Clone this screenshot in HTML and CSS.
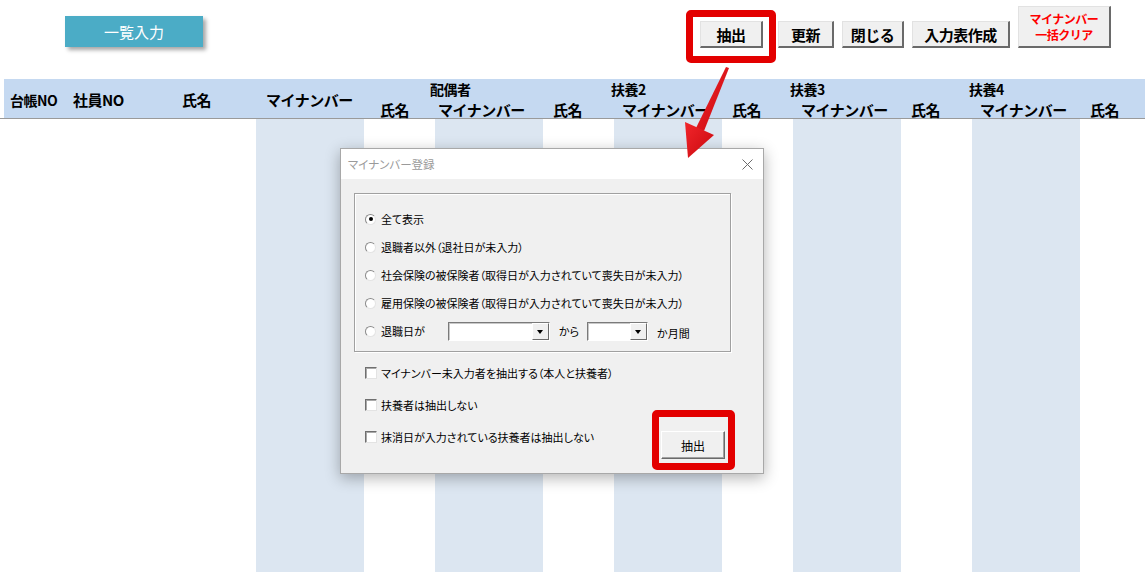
FILE: index.html
```html
<!DOCTYPE html>
<html lang="ja">

<head>
  <meta charset="UTF-8" />
  <title>マイナンバー登録</title>
  <link rel="stylesheet" href="styles.css">
</head>

<body>

  <!-- top buttons -->
  <div class="toolbar">
    <button class="list-btn">一覧入力</button>
    <div class="actions">
      <span class="mark mark-top"><button class="btn w-extract">抽出</button></span>
      <button class="btn w-update">更新</button>
      <button class="btn w-close">閉じる</button>
      <button class="btn w-make">入力表作成</button>
      <button class="btn w-clear">マイナンバー<br>一括クリア</button>
    </div>
  </div>

  <!-- sheet -->
  <div class="sheet">
    <div class="sheet-head">
      <div class="h-span h-ledger">台帳NO</div>
      <div class="h-span h-emp">社員NO</div>
      <div class="h-span h-name1">氏名</div>
      <div class="h-span h-num1">マイナンバー</div>

      <div class="grp grp-spouse">配偶者</div>
      <div class="grp grp-2">扶養2</div>
      <div class="grp grp-3">扶養3</div>
      <div class="grp grp-4">扶養4</div>

      <div class="sub h-name first">氏名</div>
      <div class="sub h-num first">マイナンバー</div>
      <div class="sub h-name">氏名</div>
      <div class="sub h-num">マイナンバー</div>
      <div class="sub h-name">氏名</div>
      <div class="sub h-num">マイナンバー</div>
      <div class="sub h-name">氏名</div>
      <div class="sub h-num">マイナンバー</div>
      <div class="sub h-name">氏名</div>
    </div>
    <div class="sheet-body">
      <div></div>
      <div></div>
      <div></div>
      <div class="stripe"></div>
      <div></div>
      <div class="stripe"></div>
      <div></div>
      <div class="stripe"></div>
      <div></div>
      <div class="stripe"></div>
      <div></div>
      <div class="stripe"></div>
      <div></div>
    </div>
  </div>

  <!-- dialog -->
  <div class="dialog">
    <div class="dialog-title">
      <span>マイナンバー登録</span>
      <svg class="x-icon" width="11" height="11" viewBox="0 0 11 11">
        <path d="M0.5 0.5L10.5 10.5M10.5 0.5L0.5 10.5" stroke="#6b6b6b" stroke-width="1" />
      </svg>
    </div>
    <div class="dialog-body">
      <div class="frame">
        <div class="opt"><span class="radio on"></span>全て表示</div>
        <div class="opt"><span class="radio"></span>退職者以外（退社日が未入力）</div>
        <div class="opt"><span class="radio"></span>社会保険の被保険者（取得日が入力されていて喪失日が未入力）</div>
        <div class="opt"><span class="radio"></span>雇用保険の被保険者（取得日が入力されていて喪失日が未入力）</div>
        <div class="opt">
          <span class="radio"></span><span class="opt-label">退職日が</span>
          <span class="combo combo-date"><span class="drop"></span></span>
          <span class="from">から</span>
          <span class="combo combo-month"><span class="drop"></span></span>
          <span class="months">か月間</span>
        </div>
      </div>

      <div class="check-row"><span class="check"></span>マイナンバー未入力者を抽出する（本人と扶養者）</div>
      <div class="check-row"><span class="check"></span>扶養者は抽出しない</div>
      <div class="check-row last">
        <span class="check-text"><span class="check"></span>抹消日が入力されている扶養者は抽出しない</span>
        <span class="mark mark-dlg"><button class="dlg-btn">抽出</button></span>
      </div>
    </div>
  </div>

  <!-- annotation arrow -->
  <svg class="arrow" width="1145" height="573" viewBox="0 0 1145 573">
    <defs>
      <linearGradient id="red" x1="0" y1="0" x2="1" y2="1">
        <stop offset="0" stop-color="#f2262b" />
        <stop offset="1" stop-color="#c8080e" />
      </linearGradient>
    </defs>
    <polygon points="726,67 729,68 704,131 696,128" fill="url(#red)" />
    <polygon points="685,122 714,135 688,158" fill="url(#red)" />
  </svg>

</body>

</html>
```

FILE: styles.css
```css
:root {
  --cols: 61px 95px 96px 108px 71px 108px 71px 108px 71px 108px 71px 108px 65px;
  --head-blue: #c5d9f1;
  --stripe: #dce6f1;
  --mark-red: #e30000;
  --face: #f0f0f0;
}

* {
  margin: 0;
  padding: 0;
  box-sizing: border-box;
}

body {
  position: relative;
  width: 1145px;
  height: 573px;
  overflow: hidden;
  background-color: #fff;
  font-family: "Noto Sans CJK JP", "Noto Sans", sans-serif;
  color: #000;
}

/* Top buttons */
.toolbar {
  display: flex;
  align-items: flex-start;
  height: 79px;
  padding: 0 34px 0 65px;
}

.list-btn {
  margin-top: 16px;
  width: 138px;
  height: 31px;
  background-color: #4bacc6;
  color: #fff;
  border: none;
  font-family: inherit;
  font-size: 15px;
  box-shadow: 3px 3px 4px rgba(0, 0, 0, 0.35);
}

.actions {
  margin-left: auto;
  display: flex;
  align-items: flex-end;
  gap: 8px;
  height: 48px;
}

.btn {
  height: 27px;
  background-color: var(--face);
  border: 1px solid;
  border-color: #e2e2e2 #6a6a6a #6a6a6a #e2e2e2;
  border-right-width: 2px;
  border-bottom-width: 2px;
  font-family: inherit;
  font-size: 15px;
  font-weight: bold;
  letter-spacing: -0.5px;
  line-height: 1;
}

.w-extract { width: 63px; }
.w-update { width: 56px; margin-left: 7px; }
.w-close { width: 62px; }
.w-make { width: 98px; }

.w-clear {
  width: 93px;
  height: 42px;
  color: #ff0000;
  font-size: 12px;
  line-height: 16px;
}

/* red highlight boxes */
.mark {
  position: relative;
  display: flex;
}

.mark::after {
  content: "";
  position: absolute;
  border: 7px solid var(--mark-red);
  border-radius: 5px;
  pointer-events: none;
}

.mark-top::after {
  inset: -11px -13px -15px -14px;
}

.mark-dlg::after {
  inset: -11px -10px -11px -9px;
}

/* Sheet */
.sheet {
  margin-left: 4px;
}

.sheet-head,
.sheet-body {
  display: grid;
  grid-template-columns: var(--cols);
}

.sheet-head {
  grid-template-rows: 20px 19px;
  background-color: var(--head-blue);
  font-size: 15px;
  font-weight: bold;
  line-height: 16px;
  letter-spacing: -0.5px;
  white-space: nowrap;
}

.h-span {
  grid-row: 1 / 3;
  align-self: center;
  padding-top: 3px;
}

.h-ledger { padding-left: 6px; font-size: 14px; }
.h-emp { padding-left: 8px; }
.h-name1 { padding-left: 22px; }
.h-num1 { padding-left: 10px; }

.grp {
  grid-row: 1;
  padding-top: 2px;
  margin-left: -3px;
  font-size: 14px;
}

.grp-spouse { grid-column: 6 / span 2; margin-left: -5px; }
.grp-2 { grid-column: 8 / span 2; }
.grp-3 { grid-column: 10 / span 2; }
.grp-4 { grid-column: 12 / span 2; }

.sub {
  grid-row: 2;
  padding-top: 3px;
}

.h-name { padding-left: 10px; }
.h-num { padding-left: 8px; }
.h-name.first { padding-left: 16px; }
.h-num.first { padding-left: 3px; }

.sheet-body {
  height: 454px;
  margin-left: -4px;
  padding-left: 4px;
  border-top: 1px solid #9a9a9a;
}

.stripe {
  background-color: var(--stripe);
}

/* Dialog */
.dialog {
  position: absolute;
  left: 340px;
  top: 148px;
  width: 424px;
  height: 326px;
  border: 1px solid #a8a8a8;
  background-color: var(--face);
  box-shadow: 0 4px 14px rgba(0, 0, 0, 0.3);
  font-size: 11px;
  font-feature-settings: "palt";
  z-index: 2;
}

.dialog-title {
  display: flex;
  align-items: center;
  justify-content: space-between;
  height: 30px;
  padding: 0 10px 0 7px;
  background-color: #fff;
  color: #9a9a9a;
  font-size: 11.5px;
}

.x-icon {
  display: block;
}

.dialog-body {
  padding: 14px 0 0 13px;
}

.frame {
  width: 377px;
  height: 159px;
  margin-bottom: 5px;
  padding-top: 11px;
  border: 1px solid #a0a0a0;
  box-shadow: inset 1px 1px 0 #fff, 1px 1px 0 #fff;
}

.opt {
  display: flex;
  align-items: center;
  height: 28px;
  padding-left: 10px;
  white-space: nowrap;
}

.radio {
  position: relative;
  width: 11px;
  height: 11px;
  margin-right: 5px;
  border: 1px solid;
  border-color: #8a8a8a #e4e4e4 #e4e4e4 #8a8a8a;
  border-radius: 50%;
  background-color: #fff;
}

.radio.on::after {
  content: "";
  position: absolute;
  left: 2.5px;
  top: 2.5px;
  width: 4px;
  height: 4px;
  border-radius: 50%;
  background-color: #000;
}

.opt-label {
  width: 67px;
}

.combo {
  position: relative;
  display: flex;
  justify-content: flex-end;
  height: 19px;
  border: 1px solid;
  border-color: #7a7a7a #fff #fff #7a7a7a;
  box-shadow: inset 1px 1px 0 #c8c8c8;
  background-color: #fff;
}

.combo-date { width: 102px; }
.combo-month { width: 61px; }

.drop {
  position: relative;
  width: 17px;
  height: 17px;
  background-color: var(--face);
  border: 1px solid;
  border-color: #fff #6a6a6a #6a6a6a #fff;
}

.drop::after {
  content: "";
  position: absolute;
  left: 4px;
  top: 6px;
  border-top: 4px solid #000;
  border-left: 3.5px solid transparent;
  border-right: 3.5px solid transparent;
}

.from {
  width: 28px;
  margin-left: 9px;
}

.months {
  margin-left: 9px;
  padding-top: 3px;
}

.check-row {
  display: flex;
  align-items: center;
  height: 32px;
  padding-left: 11px;
  white-space: nowrap;
}

.check {
  width: 12px;
  height: 12px;
  margin-right: 4px;
  background-color: #fff;
  border: 1px solid;
  border-color: #6f6f6f #e3e3e3 #e3e3e3 #6f6f6f;
  box-shadow: inset 1px 1px 0 #a9a9a9;
}

.check-row.last {
  align-items: flex-start;
  justify-content: space-between;
  padding-right: 38px;
}

.check-text {
  display: flex;
  align-items: center;
  height: 32px;
}

.dlg-btn {
  margin-top: 10px;
  width: 64px;
  height: 28px;
  background-color: var(--face);
  border: 1px solid;
  border-color: #fff #6a6a6a #6a6a6a #fff;
  box-shadow: inset -1px -1px 0 #a0a0a0;
  font-family: inherit;
  font-size: 12px;
}

/* annotation arrow */
.arrow {
  position: absolute;
  left: 0;
  top: 0;
  pointer-events: none;
  z-index: 3;
}
```
